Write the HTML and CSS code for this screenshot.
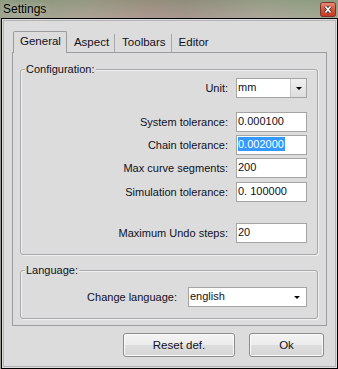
FILE: index.html
```html
<!DOCTYPE html>
<html lang="en">
<head>
    <meta charset="UTF-8">
    <title>Settings</title>
    <link rel="stylesheet" href="styles.css">
</head>
<body>
    <div class="titlebar">
        <span class="title">Settings</span>
        <span class="close">
            <svg width="16" height="15" viewBox="0 0 16 15">
                <defs>
                    <linearGradient id="red" x1="0" y1="0" x2="0" y2="1">
                        <stop offset="0" stop-color="#e8907a"/>
                        <stop offset="0.5" stop-color="#d2553c"/>
                        <stop offset="1" stop-color="#c23a22"/>
                    </linearGradient>
                </defs>
                <rect x="0.5" y="0.5" width="15" height="14" rx="2" fill="url(#red)" stroke="#7a3326"/>
                <path d="M5.5 4.5 L10.5 10.5 M10.5 4.5 L5.5 10.5" stroke="#4a2a26" stroke-width="3.4"/>
                <path d="M5.5 4.5 L10.5 10.5 M10.5 4.5 L5.5 10.5" stroke="#fff" stroke-width="1.7"/>
            </svg>
        </span>
    </div>

    <div class="window">
        <div class="frame">
            <div class="tabwidget">
                <div class="tabs">
                    <div class="tab active">General</div>
                    <div class="tab">Aspect</div>
                    <div class="tab">Toolbars</div>
                    <div class="tab last">Editor</div>
                </div>
                <div class="pane">
                    <div class="group config">
                        <div class="group-title">Configuration:</div>
                        <div class="row first">
                            <label>Unit:</label>
                            <div class="combo small">
                                <span class="combo-text">mm</span>
                                <span class="combo-btn"><i class="arrow"></i></span>
                            </div>
                        </div>
                        <div class="row spaced">
                            <label>System tolerance:</label>
                            <div class="field">0.000100</div>
                        </div>
                        <div class="row">
                            <label>Chain tolerance:</label>
                            <div class="field"><span class="sel">0.002000</span></div>
                        </div>
                        <div class="row">
                            <label>Max curve segments:</label>
                            <div class="field">200</div>
                        </div>
                        <div class="row plus">
                            <label>Simulation tolerance:</label>
                            <div class="field">0. 100000</div>
                        </div>
                        <div class="row wide">
                            <label>Maximum Undo steps:</label>
                            <div class="field">20</div>
                        </div>
                    </div>

                    <div class="group lang">
                        <div class="group-title">Language:</div>
                        <div class="row first">
                            <label>Change language:</label>
                            <div class="combo large">
                                <span class="combo-text">english</span>
                                <span class="combo-btn flat"><i class="arrow"></i></span>
                            </div>
                        </div>
                    </div>
                </div>
            </div>

            <div class="buttons">
                <button class="btn reset">Reset def.</button>
                <button class="btn ok">Ok</button>
            </div>
        </div>
    </div>
</body>
</html>
```

FILE: styles.css
```css
body {
    margin: 0;
    width: 338px;
    height: 369px;
    font-family: "Liberation Sans", Arial, sans-serif;
    font-size: 11px;
    color: #10101c;
    background-color: #9c9a8c;
    overflow: hidden;
}
.titlebar {
    height: 18px;
    display: flex;
    align-items: center;
    justify-content: space-between;
    padding: 0 1px 0 3px;
    background:
        linear-gradient(to bottom, rgba(120, 150, 110, 0.35), rgba(200, 190, 180, 0.25)),
        linear-gradient(to right, #929c86 0%, #a39a8c 25%, #a38a84 45%, #9c8a84 55%, #a4a092 78%, #94a088 100%);
}
.title {
    font-size: 12px;
    color: #000;
    text-shadow: 0 0 6px rgba(255, 255, 255, 0.5);
}
.close {
    display: flex;
    margin-right: 1px;
}
.window {
    box-sizing: border-box;
    height: 351px;
    width: 337px;
    margin-left: 1px;
    border: 1px solid #000;
    background-color: #dcdcdc;
    padding: 1px;
}
.frame {
    box-sizing: border-box;
    height: 100%;
    border: 1px solid #b4b4b8;
    padding-top: 10px;
}
.tabwidget {
    margin: 0 8px;
}
.tabs {
    display: flex;
    align-items: flex-end;
    height: 21px;
}
.tab {
    box-sizing: border-box;
    height: 18px;
    line-height: 17px;
    padding: 0 5px 0 7px;
    font-size: 11.5px;
    border-right: 1px solid #a8a8a8;
}
.tab.last {
    border-right: none;
}
.tab.active {
    position: relative;
    z-index: 1;
    height: 22px;
    line-height: 19px;
    margin: 0 0 -1px 1px;
    padding: 0 5px 0 6px;
    border: 1px solid #9c9ca0;
    border-bottom: none;
    border-radius: 2px 2px 0 0;
    background-color: #dcdcdc;
}
.pane {
    box-sizing: border-box;
    height: 274px;
    border: 1px solid #9c9ca0;
    padding: 0 8px 0 7px;
}
.group {
    border: 1px solid #a8a8ac;
    border-radius: 3px;
    box-shadow: inset 1px 1px 0 #f0f0f0, 1px 1px 0 #f0f0f0;
}
.group.config {
    margin-top: 16px;
    padding: 0 10px 11px 0;
}
.group.lang {
    margin-top: 15px;
    padding: 0 10px 11px 0;
}
.group-title {
    width: fit-content;
    margin: -8px 0 0 4px;
    padding: 0 1px;
    line-height: 14px;
    background-color: #dcdcdc;
}
.row {
    display: flex;
    align-items: center;
    justify-content: flex-end;
    margin-top: 3px;
}
.config .row.first {
    margin-top: 2px;
}
.lang .row.first {
    margin-top: 10px;
}
.row.spaced {
    margin-top: 14px;
}
.row.plus {
    margin-top: 4px;
}
.row.wide {
    margin-top: 21px;
}
.row label {
    margin-right: 8px;
}
.lang .row label {
    margin-right: 11px;
}
.field, .combo {
    box-sizing: border-box;
    height: 20px;
    border: 1px solid #a4a4a4;
    background-color: #fff;
}
.field {
    width: 71px;
    line-height: 17px;
    padding-left: 1px;
}
.sel {
    background-color: #3399ff;
    color: #fff;
    padding: 1px 1px 1px 0;
}
.combo {
    display: flex;
    align-items: stretch;
}
.combo.small {
    width: 71px;
}
.combo.large {
    width: 119px;
}
.combo-text {
    flex: 1;
    line-height: 16px;
    padding-left: 1px;
}
.combo-btn {
    width: 15px;
    display: flex;
    align-items: center;
    justify-content: center;
    background: linear-gradient(to bottom, #f0f0f0, #dedede);
    border-left: 1px solid #c8c8c8;
}
.combo-btn.flat {
    background: #fff;
    border-left: none;
    margin-right: 2px;
}
.arrow {
    width: 0;
    height: 0;
    border-left: 3px solid transparent;
    border-right: 3px solid transparent;
    border-top: 3px solid #000;
}
.buttons {
    display: flex;
    justify-content: flex-end;
    gap: 14px;
    margin: 7px 11px 0 0;
}
.btn {
    height: 24px;
    font-family: "Liberation Sans", Arial, sans-serif;
    font-size: 11.5px;
    color: #10101c;
    border: 1px solid #8c8c8c;
    border-radius: 3px;
    background: linear-gradient(to bottom, #f4f4f4 0%, #ececec 50%, #dedede 51%, #d6d6d6 100%);
    box-shadow: inset 0 0 0 1px #fafafa;
    padding: 0;
}
.btn.reset {
    width: 112px;
}
.btn.ok {
    width: 75px;
}
```
